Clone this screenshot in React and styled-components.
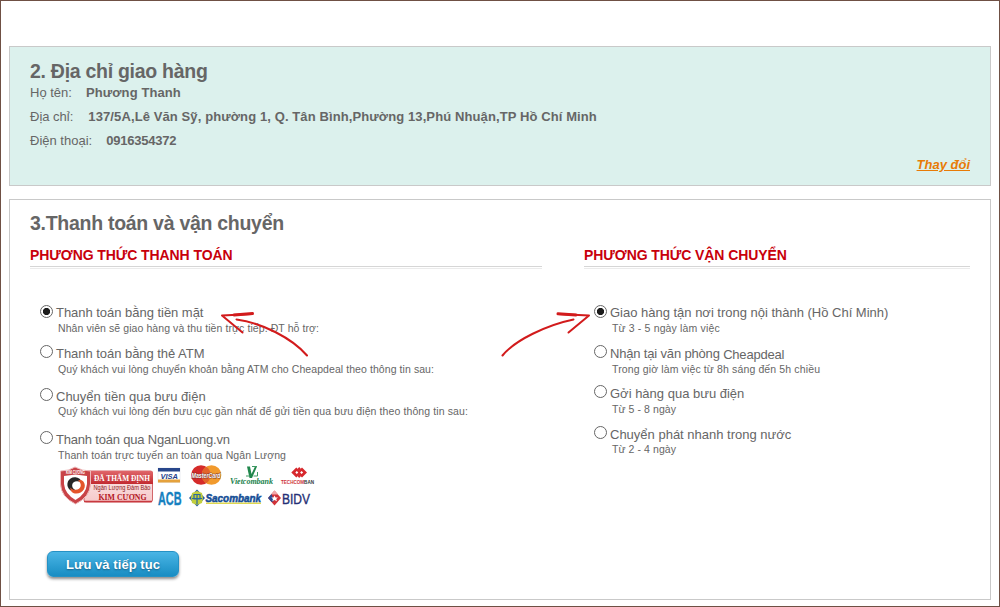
import React, { useState } from 'react';
import styled, { createGlobalStyle } from 'styled-components';

const GlobalStyle = createGlobalStyle`
  * { box-sizing: border-box; }
  body {
    margin: 0;
    background: #fff;
    color: #666;
    font: 13px/24px "Liberation Sans", Arial, sans-serif;
  }
`;

const Page = styled.main`
  position: relative;
  display: flex;
  flex-direction: column;
  gap: 13px;
  width: 1000px;
  height: 607px;
  padding: 45px 8px 6px;
  border: 1px solid #6f5044;
  overflow: hidden;
`;

const Panel = styled.section`
  display: flex;
  flex-direction: column;
  border: 1px solid #c9c9c9;
  padding: 0 20px;
`;

const AddressPanel = styled(Panel)`
  height: 140px;
  padding-top: 15px;
  background: #dcf1ed;
`;

const CheckoutPanel = styled(Panel)`
  height: 401px;
  padding-top: 11px;
`;

const Title = styled.h2`
  margin: 0;
  font-size: 19.5px;
  line-height: ${(p) => p.$line}px;
  font-weight: 700;
  letter-spacing: -0.28px;
  white-space: nowrap;
`;

const Detail = styled.div`
  display: flex;
  gap: ${(p) => p.$gap}px;
  height: 24px;
  white-space: nowrap;
`;

const DetailValue = styled.strong`
  letter-spacing: ${(p) => p.$tracking}px;
`;

const ChangeLink = styled.a`
  align-self: flex-end;
  color: #e87b06;
  font-weight: 700;
  font-style: italic;
  text-decoration: underline;
`;

const Columns = styled.div`
  display: grid;
  grid-template-columns: 512px 386px;
  column-gap: 42px;
  height: 307px;
  margin-top: 9px;
`;

const Column = styled.div`
  display: flex;
  flex-direction: column;
`;

const ColumnTitle = styled.h3`
  margin: 0;
  height: 23px;
  border-bottom: 1px solid #d6d6d6;
  box-shadow: 0 1px #fff, 0 2px #ebebeb;
  color: #c8000b;
  font-size: 14px;
  line-height: 22px;
  letter-spacing: -0.09px;
  white-space: nowrap;
`;

const OptionList = styled.div`
  display: flex;
  flex-direction: column;
  padding: 38px 0 0 10px;
`;

const OptionRow = styled.label`
  display: grid;
  grid-template-columns: 16px 1fr;
  align-content: start;
  height: ${(p) => p.$height}px;
  white-space: nowrap;
`;

const Radio = styled.input.attrs({ type: 'radio' })`
  appearance: none;
  width: 13px;
  height: 13px;
  margin: 0;
  border: 1px solid #666;
  border-radius: 50%;
  background: ${(p) => (p.checked ? 'radial-gradient(circle, #1c1c1c 3.2px, #fff 4px)' : '#fff')};
`;

const OptionLabel = styled.span`
  height: 16px;
  padding-top: ${(p) => p.$drop || 0}px;
  line-height: 16px;
  letter-spacing: ${(p) => p.$tracking || 0}px;
`;

const ShopName = styled.span`
  position: relative;
  top: 1px;
  letter-spacing: -0.2px;
`;

const OptionNote = styled.span`
  grid-column: 2;
  padding: ${(p) => p.$drop || 0}px 0 0 2px;
  font-size: 10.5px;
  line-height: 14px;
  letter-spacing: ${(p) => p.$tracking}px;
`;

const Logos = styled.svg`
  display: block;
  width: 256px;
  height: 44px;
  margin: 5px 0 0 20px;
`;

const SubmitButton = styled.button`
  width: 132px;
  height: 26px;
  margin-left: 17px;
  padding: 1px 0 0;
  border: 1px solid #2591c4;
  border-radius: 6px;
  background: linear-gradient(#4ab5e5, #188dc3);
  box-shadow: 0 2px 3px rgba(0, 0, 0, 0.45);
  color: #fff;
  font: 700 13px/24px "Liberation Sans", Arial, sans-serif;
  letter-spacing: 0.06px;
  text-shadow: 0 1px 2px #175f85;
`;

const Arrows = styled.svg`
  position: absolute;
  left: -1px;
  top: -1px;
  width: 1000px;
  height: 607px;
  pointer-events: none;
`;

const payments = [
  { label: 'Thanh toán bằng tiền mặt', note: 'Nhân viên sẽ giao hàng và thu tiền trực tiếp. ĐT hỗ trợ:', height: 40, tracking: -0.03, noteTracking: 0.08 },
  { label: 'Thanh toán bằng thẻ ATM', note: 'Quý khách vui lòng chuyển khoản bằng ATM cho Cheapdeal theo thông tin sau:', height: 43, tracking: -0.04, noteTracking: 0.075, drop: 1, noteDrop: 1 },
  { label: 'Chuyển tiền qua bưu điện', note: 'Quý khách vui lòng đến bưu cục gần nhất để gửi tiền qua bưu điện theo thông tin sau:', height: 43, noteTracking: 0.105, drop: 1 },
  { label: 'Thanh toán qua NganLuong.vn', note: 'Thanh toán trực tuyến an toàn qua Ngân Lượng', height: 30, tracking: -0.2, noteTracking: 0.09, drop: 1, noteDrop: 1 },
];

const deliveries = [
  { label: 'Giao hàng tận nơi trong nội thành (Hồ Chí Minh)', note: 'Từ 3 - 5 ngày làm việc', height: 40, tracking: -0.01, noteTracking: 0.15 },
  { label: 'Nhận tại văn phòng ', shop: 'Cheapdeal', note: 'Trong giờ làm việc từ 8h sáng đến 5h chiều', height: 40, tracking: -0.17, noteTracking: 0.13, drop: 1, noteDrop: 1 },
  { label: 'Gởi hàng qua bưu điện', note: 'Từ 5 - 8 ngày', height: 41, noteTracking: 0.08, drop: 1, noteDrop: 1 },
  { label: 'Chuyển phát nhanh trong nước', note: 'Từ 2 - 4 ngày', height: 30, noteTracking: 0.08, drop: 1 },
];

function Options({ name, items }) {
  const [selected, setSelected] = useState(0);
  return items.map((item, i) => (
    <OptionRow key={item.label} $height={item.height}>
      <Radio name={name} checked={selected === i} onChange={() => setSelected(i)} />
      <OptionLabel $tracking={item.tracking} $drop={item.drop}>
        {item.label}
        {item.shop && <ShopName>{item.shop}</ShopName>}
      </OptionLabel>
      <OptionNote $tracking={item.noteTracking} $drop={item.noteDrop}>{item.note}</OptionNote>
    </OptionRow>
  ));
}

function PartnerLogos() {
  return (
    <Logos viewBox="60 466 256 44" overflow="visible" fontFamily="Liberation Sans, Arial, sans-serif" fontWeight="700">
      <defs>
        <linearGradient id="sealTop" x1="0" y1="0" x2="0" y2="1">
          <stop offset="0" stopColor="#e0666a" />
          <stop offset="1" stopColor="#c22a30" />
        </linearGradient>
        <linearGradient id="sealBottom" x1="0" y1="0" x2="0" y2="1">
          <stop offset="0" stopColor="#fbe9e9" />
          <stop offset="1" stopColor="#f6c9ca" />
        </linearGradient>
        <linearGradient id="techcom">
          <stop offset=".7" stopColor="#cb3237" />
          <stop offset=".7" stopColor="#333" />
        </linearGradient>
      </defs>

      <rect x="84" y="471" width="68.500" height="31" rx="2" fill="url(#sealBottom)" stroke="#d2676b" strokeWidth="1" />
      <path d="M80 471h71a2 2 0 0 1 2 2v11H80z" fill="url(#sealTop)" />
      <path d="M84 501.500h68" stroke="#c8393f" strokeWidth="1.500" />
      <text x="94" y="480.700" fontSize="8" fontFamily="Liberation Serif, serif" fill="#fff" textLength="56" lengthAdjust="spacingAndGlyphs">ĐÃ THẨM ĐỊNH</text>
      <text x="93.500" y="490" fontSize="6.300" fontWeight="400" fill="#8d1a22" textLength="57" lengthAdjust="spacingAndGlyphs">Ngân Lượng Đảm Bảo</text>
      <text x="98.500" y="499.500" fontSize="8.500" fontFamily="Liberation Serif, serif" fill="#b3151d" textLength="48" lengthAdjust="spacingAndGlyphs">KIM CƯƠNG</text>
      <path d="M60.500 471Q69 471 75 467Q82 471 90.500 471V484Q90 497 75.500 504Q61 497 60.500 484Z" fill="#c94347" stroke="#edb9ba" strokeWidth="1" />
      <path d="M64 476Q70 475 75.500 474.500Q81 475 87 476V484Q86 494 75.500 500Q65 494 64 484Z" fill="#fff" />
      <text x="66" y="473.700" fontSize="4.500" fill="#fff" textLength="19" lengthAdjust="spacingAndGlyphs">KIM CƯƠNG</text>
      <path d="M76.500 477.500C69 476 65 484 69 489C71 491.500 74 491 75 489.800C70.500 487.500 71.500 481.200 77 481.200C79.500 481.200 81 482 81.500 483.500C82 480.500 79.500 478 76.500 477.500Z" fill="#262626" />
      <path d="M75 493.500C82 494.500 87.500 487.500 83.500 481.800C82 479.500 79.500 479.500 78 480.700C82.500 483 81.500 489.800 75.500 489.800C73 489.800 71.500 489 70.500 487.500C70 490.500 72 493 75 493.500Z" fill="#e4552b" />

      <rect x="158" y="468" width="22" height="14.500" fill="#fff" stroke="#d8dbe3" strokeWidth=".5" />
      <rect x="158" y="468" width="22" height="3.500" fill="#28468b" />
      <rect x="158" y="479.500" width="22" height="3" fill="#e5a23c" />
      <text x="160.500" y="478.800" fontSize="8" fontStyle="italic" fill="#24408a" textLength="17.500" lengthAdjust="spacingAndGlyphs">VISA</text>

      <circle cx="201" cy="475" r="9.800" fill="#d52b2a" />
      <circle cx="211.500" cy="475" r="9.800" fill="#f19a2d" />
      <path d="M206.200 466.800A9.800 9.800 0 0 1 206.200 483.200A9.800 9.800 0 0 1 206.200 466.800Z" fill="#e3632a" />
      <text x="191.500" y="477.500" fontSize="7" fontStyle="italic" fill="#fff" stroke="#71302a" strokeWidth=".8" paintOrder="stroke" textLength="29" lengthAdjust="spacingAndGlyphs">MasterCard</text>

      <path d="M247 466.500H250L251.500 474L255 466.500H257L252 478H249.500Z" fill="#21874c" />
      <path d="M252 466.500H257M246 476H250M253.500 476H257.500V472" fill="none" stroke="#3e9a64" strokeWidth="1" />
      <text x="230" y="483.500" fontSize="8" fontFamily="Liberation Serif, serif" fontStyle="italic" fill="#20814b" textLength="43" lengthAdjust="spacingAndGlyphs">Vietcombank</text>

      <path d="M296.300 467.500L301.300 472.500L296.300 477.500L291.300 472.500ZM302 467.500L307 472.500L302 477.500L297 472.500Z" fill="#d7282d" />
      <path d="M299.200 467L301 469L299.200 471L297.400 469ZM299.200 474L301 476L299.200 478L297.400 476Z" fill="#d7282d" />
      <path d="M296.800 471L298.300 472.500L296.800 474L295.300 472.500ZM301.600 471L303.100 472.500L301.600 474L300.100 472.500Z" fill="#fff" />
      <text x="281" y="484" fontSize="5" fill="url(#techcom)" textLength="33" lengthAdjust="spacingAndGlyphs">TECHCOMBAN</text>

      <text x="158" y="504.500" fontSize="17.500" fill="#1680c0" stroke="#1680c0" strokeWidth=".4" textLength="23.500" lengthAdjust="spacingAndGlyphs">ACB</text>

      <path d="M197 489.500L205 498L197 506.500L189 498Z" fill="#255ba0" />
      <path d="M192 493L197 491L202 493L203 498L202 503L197 505L192 503L191 498Z" fill="#c3cf3d" />
      <path d="M194 494.500H200V499H194ZM197 494V504.500M192 498.500H202" fill="none" stroke="#2b6aa0" strokeWidth="1.200" />
      <path d="M206 503.300H261" stroke="#dfd850" strokeWidth="1.500" />
      <text x="205.500" y="501.500" fontSize="10" fontStyle="italic" fill="#154d96" stroke="#154d96" strokeWidth=".5" textLength="55.500" lengthAdjust="spacingAndGlyphs">Sacombank</text>

      <path d="M274.500 490.500L281 498L274.500 505.500L268 498Z" fill="#d13239" />
      <path d="M274.500 490.500L278 494.500H271Z" fill="#f0a8aa" />
      <path d="M268 498L271.500 494L274 501L271.500 502Z" fill="#2b4c93" />
      <path d="M274.500 495.500L275.600 497.500H278L276.200 499L277 501.300L274.500 500L272.300 501.300L273 499L271.300 497.500H273.500Z" fill="#fff" />
      <text x="282" y="503.500" fontSize="15" fontWeight="400" fill="#252f75" stroke="#252f75" strokeWidth=".4" textLength="28" lengthAdjust="spacingAndGlyphs">BIDV</text>
    </Logos>
  );
}

export default function App() {
  return (
    <Page>
      <GlobalStyle />
      <AddressPanel>
        <Title $line={19}>2. Địa chỉ giao hàng</Title>
        <Detail $gap={14}>
          <span>Họ tên:</span>
          <DetailValue $tracking={0.1}>Phương Thanh</DetailValue>
        </Detail>
        <Detail $gap={15}>
          <span>Địa chỉ:</span>
          <DetailValue $tracking={0.105}>137/5A,Lê Văn Sỹ, phường 1, Q. Tân Bình,Phường 13,Phú Nhuận,TP Hồ Chí Minh</DetailValue>
        </Detail>
        <Detail $gap={14}>
          <span>Điện thoại:</span>
          <DetailValue $tracking={-0.23}>0916354372</DetailValue>
        </Detail>
        <ChangeLink>Thay đổi</ChangeLink>
      </AddressPanel>

      <CheckoutPanel>
        <Title $line={24}>3.Thanh toán và vận chuyển</Title>
        <Columns>
          <Column>
            <ColumnTitle>PHƯƠNG THỨC THANH TOÁN</ColumnTitle>
            <OptionList>
              <Options name="payment" items={payments} />
              <PartnerLogos />
            </OptionList>
          </Column>
          <Column>
            <ColumnTitle>PHƯƠNG THỨC VẬN CHUYỂN</ColumnTitle>
            <OptionList>
              <Options name="delivery" items={deliveries} />
            </OptionList>
          </Column>
        </Columns>
        <SubmitButton>Lưu và tiếp tục</SubmitButton>
      </CheckoutPanel>

      <Arrows viewBox="0 0 1000 607" fill="none" stroke="#d21b1c" strokeWidth="2" strokeLinecap="round" strokeLinejoin="round">
        <path d="M252 314L222 315.500L242.500 332.500" />
        <path d="M252.500 313.500L234 315" strokeWidth="3" />
        <path d="M236.500 319.500C262 323 292 338 307 355.500" />
        <path d="M558 314L589 315.500L568.500 332.500" />
        <path d="M558 313.800L576 315" strokeWidth="3" />
        <path d="M573.500 319.500C547 325 515 340 502.500 355.500" />
      </Arrows>
    </Page>
  );
}
